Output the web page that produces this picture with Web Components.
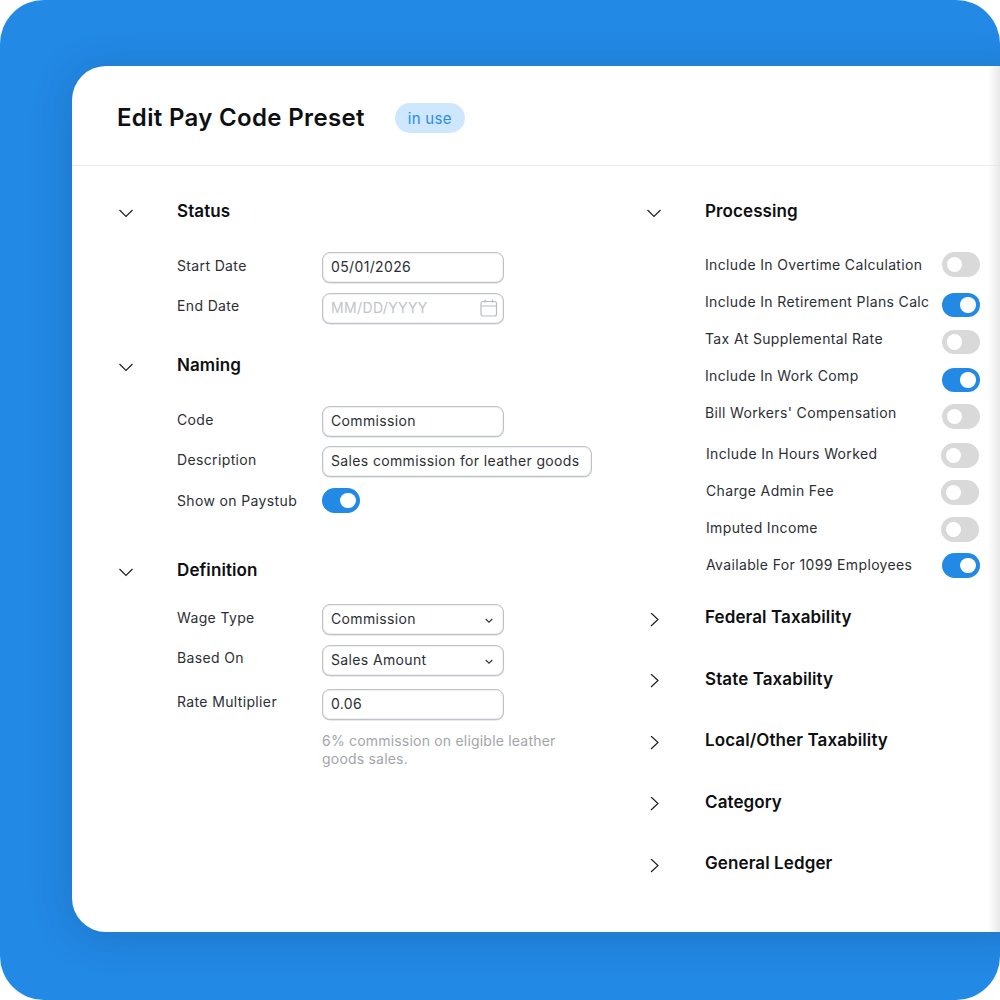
<!DOCTYPE html>
<html>
<head>
<meta charset="utf-8">
<title>Edit Pay Code Preset</title>
<style>
html, body { margin: 0; background: #fff; }
body { font-family: Inter, "Noto Sans", sans-serif; }
</style>
</head>
<body>
<pay-frame>
  <pay-card>
    <span slot="title">Edit Pay Code Preset</span>
    <span slot="badge">in use</span>

    <div slot="left">
      <pay-section heading="Status" style="--rows-top:31px">
        <form-row label="Start Date"><text-field>05/01/2026</text-field></form-row>
        <form-row label="End Date" style="--row-top:10px;--label-top:-1px"><text-field kind="date" placeholder>MM/DD/YYYY</text-field></form-row>
      </pay-section>
      <pay-section heading="Naming" style="--rows-top:31px;--section-top:31px">
        <form-row label="Code"><text-field>Commission</text-field></form-row>
        <form-row label="Description" style="--row-top:9px"><text-field wide>Sales commission for leather goods</text-field></form-row>
        <form-row label="Show on Paystub" style="--row-top:11px;--label-top:-1px"><toggle-switch on></toggle-switch></form-row>
      </pay-section>
      <pay-section heading="Definition" style="--rows-top:24px;--section-top:44.5px">
        <form-row label="Wage Type"><text-field kind="select">Commission</text-field></form-row>
        <form-row label="Based On" style="--row-top:10px;--label-top:-1px"><text-field kind="select">Sales Amount</text-field></form-row>
        <form-row label="Rate Multiplier" style="--row-top:13px;--label-top:-1px"><text-field>0.06</text-field></form-row>
        <form-hint>6% commission on eligible leather goods sales.</form-hint>
      </pay-section>
    </div>

    <div slot="right">
      <pay-section heading="Processing" style="--rows-top:25px">
        <process-row label="Include In Overtime Calculation" style="--toggle-top:6px"></process-row>
        <process-row label="Include In Retirement Plans Calc" on style="--toggle-top:9.5px"></process-row>
        <process-row label="Tax At Supplemental Rate" style="--toggle-top:9.5px"></process-row>
        <process-row label="Include In Work Comp" on style="--toggle-top:10.5px"></process-row>
        <process-row label="Bill Workers' Compensation" style="--toggle-top:10px"></process-row>
        <process-row label="Include In Hours Worked" shifted style="--toggle-top:8px;--row-top:4px"></process-row>
        <process-row label="Charge Admin Fee" shifted style="--toggle-top:8px"></process-row>
        <process-row label="Imputed Income" shifted style="--toggle-top:8px"></process-row>
        <process-row label="Available For 1099 Employees" shifted last on style="--toggle-top:7px"></process-row>
      </pay-section>
      <pay-section heading="Federal Taxability" collapsed style="--section-top:24px"></pay-section>
      <pay-section heading="State Taxability" collapsed style="--section-top:41.5px"></pay-section>
      <pay-section heading="Local/Other Taxability" collapsed style="--section-top:41.5px"></pay-section>
      <pay-section heading="Category" collapsed style="--section-top:41.5px"></pay-section>
      <pay-section heading="General Ledger" collapsed style="--section-top:41.5px"></pay-section>
    </div>
  </pay-card>
</pay-frame>

<script>
const define = (name, html, setup) => {
  const template = document.createElement("template");
  template.innerHTML = html;
  customElements.define(name, class extends HTMLElement {
    connectedCallback() {
      if (this.shadowRoot) return;
      const shadowRoot = this.attachShadow({ mode: "open" });
      shadowRoot.appendChild(template.content.cloneNode(true));
      if (setup) setup(this, shadowRoot);
    }
  });
};

define("pay-frame", `
<style>
:host {
  display: block;
  position: relative;
  box-sizing: border-box;
  width: 1000px;
  height: 1000px;
  padding: 66px 0 68px 72px;
  background: #2289e5;
  border-radius: 44px;
  overflow: hidden;
}
.edge {
  position: absolute;
  top: 66px;
  bottom: 68px;
  right: 0;
  width: 12px;
  background: linear-gradient(to right, rgba(225,225,225,0), rgba(225,225,225,.75));
}
</style>
<slot></slot>
<div class="edge"></div>
`);

define("pay-card", `
<style>
:host {
  display: block;
  box-sizing: border-box;
  width: 970px;
  height: 866px;
  background: #fff;
  border-radius: 34px;
  box-shadow: 0 4px 44px rgba(20, 40, 70, .2);
}
header {
  display: flex;
  align-items: center;
  gap: 30px;
  box-sizing: border-box;
  height: 100px;
  padding: 4px 0 0 45px;
  border-bottom: 1px solid #ececee;
}
.title {
  font-size: 24px;
  font-weight: 600;
  letter-spacing: .33px;
  color: #0d0f12;
  line-height: 30px;
  margin-top: 1px;
}
.badge {
  display: flex;
  align-items: center;
  justify-content: center;
  width: 70px;
  height: 30px;
  border-radius: 15px;
  background: #cfe7fd;
  color: #2a8ceb;
  font-size: 15px;
  letter-spacing: .3px;
  margin-top: 1px;
}
main {
  display: grid;
  grid-template-columns: 528px 335px;
  padding: 35px 0 0 45px;
}
</style>
<header>
  <div class="title"><slot name="title"></slot></div>
  <div class="badge"><slot name="badge"></slot></div>
</header>
<main>
  <div><slot name="left"></slot></div>
  <div><slot name="right"></slot></div>
</main>
`);

define("pay-section", `
<style>
:host {
  display: block;
  margin-top: var(--section-top, 0);
}
.head {
  display: grid;
  grid-template-columns: 60px 1fr;
  height: 20px;
}
h2 {
  margin: 0;
  font-size: 17px;
  font-weight: 600;
  letter-spacing: .1px;
  line-height: 20px;
  color: #0d0f12;
}
svg { display: block; margin: 8px 0 0 2px; }
:host([collapsed]) svg { margin-top: 5.5px; }
.rows { padding: var(--rows-top, 0) 0 0 60px; }
:host([collapsed]) .rows { display: none; }
</style>
<div class="head">
  <svg width="14" height="14" viewBox="0 0 14 14" fill="none" stroke="#1d2024" stroke-width="1.2"></svg>
  <h2></h2>
</div>
<div class="rows"><slot></slot></div>
`, (el, root) => {
  root.querySelector("h2").textContent = el.getAttribute("heading");
  const svg = root.querySelector("svg");
  const d = el.hasAttribute("collapsed") ? "M4 0 L11 6.5 L4 13" : "M0.5 1 L7 7.5 L13.5 1";
  svg.innerHTML = `<path d="${d}"/>`;
});

define("form-row", `
<style>
:host {
  display: grid;
  grid-template-columns: 145px 1fr;
  margin-top: var(--row-top, 0);
  font-size: 14px;
  letter-spacing: .36px;
  color: #2b2f34;
}
.label { line-height: 28px; margin-top: var(--label-top, 0); }
</style>
<div class="label"></div>
<div><slot></slot></div>
`, (el, root) => {
  root.querySelector(".label").textContent = el.getAttribute("label");
});

define("text-field", `
<style>
:host {
  display: flex;
  align-items: center;
  justify-content: space-between;
  box-sizing: border-box;
  width: 182px;
  height: 31px;
  padding: 0 7.5px 2px 8px;
  border: 1px solid #bfc3c9;
  border-radius: 8px;
  background: #fff;
  box-shadow: inset 0 0 0 1px rgba(200, 204, 210, .3), 0 .5px 0 #d0d3d8;
  font-size: 14px;
  letter-spacing: .36px;
  color: #2b2f34;
  white-space: nowrap;
}
:host([wide]) { width: 270px; }
:host([placeholder]) { color: #c1c4c8; }
svg { display: block; flex: none; }
</style>
<slot></slot>
<span class="icon"></span>
`, (el, root) => {
  const kind = el.getAttribute("kind");
  const icon = root.querySelector(".icon");
  if (kind === "date") {
    icon.innerHTML = `<svg width="18" height="18" viewBox="0 0 18 18" fill="none" stroke="#b7bbc0" stroke-width="1.2" style="margin-right:-2px"><rect x="1" y="2.5" width="15.5" height="14.5" rx="2"/><path d="M1 7 H16.5 M5 .5 V3.5 M12.5 .5 V3.5"/></svg>`;
  } else if (kind === "select") {
    icon.innerHTML = `<svg width="8" height="6" viewBox="0 0 8 6" fill="none" stroke="#33373c" stroke-width="1.2" style="margin:5px 3px 0 0"><path d="M.7 1 L4 4.2 L7.3 1"/></svg>`;
  }
});

define("toggle-switch", `
<style>
:host {
  display: flex;
  align-items: center;
  box-sizing: border-box;
  width: 38px;
  height: 24.5px;
  padding: 0 4.5px;
  border-radius: 13px;
  background: #d9d9d9;
}
:host([on]) { background: #2289e5; justify-content: flex-end; }
i { display: block; width: 15.5px; height: 15.5px; border-radius: 50%; background: #fff; }
</style>
<i></i>
`);

define("process-row", `
<style>
:host {
  display: flex;
  justify-content: space-between;
  align-items: flex-start;
  height: 37px;
  margin-top: var(--row-top, 0);
  font-size: 14px;
  letter-spacing: .36px;
  color: #2b2f34;
}
:host([shifted]) { padding: 0 1px; }
:host([last]) { padding-right: 0; }
.label { line-height: 37px; }
toggle-switch { margin-top: var(--toggle-top, 0); }
</style>
<div class="label"></div>
<toggle-switch></toggle-switch>
`, (el, root) => {
  root.querySelector(".label").textContent = el.getAttribute("label");
  if (el.hasAttribute("on")) root.querySelector("toggle-switch").setAttribute("on", "");
});

define("form-hint", `
<style>
:host {
  display: block;
  width: 250px;
  margin: 12px 0 0 145px;
  font-size: 14px;
  line-height: 18px;
  letter-spacing: .2px;
  color: #a2a6ab;
}
</style>
<slot></slot>
`);
</script>
</body>
</html>
